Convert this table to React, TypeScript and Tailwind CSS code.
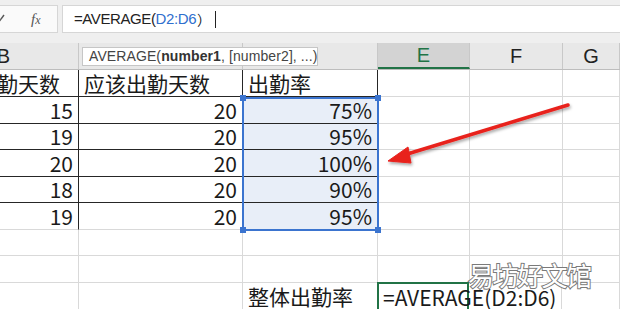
import React from 'react';

const font = "font-['Noto_Sans_CJK_SC',sans-serif]";

// column widths: B (clipped on the left), C, D, E, F, G
const colW = [
  'w-[150px] -ml-[71px] shrink-0',
  'w-[164px] shrink-0',
  'w-[135px] shrink-0',
  'w-[92px] shrink-0',
  'w-[93px] shrink-0',
  'flex-1',
];

const rowH = ['h-[27px]', 'h-[27px]', 'h-[26px]', 'h-[27px]', 'h-[26px]', 'h-[27px]', 'h-[26px]', 'h-[27px]', 'h-[30px]'];

type Cell = { text?: string; align?: 'l' | 'r'; dark?: boolean; sel?: boolean; active?: boolean };

const rows: Cell[][] = [
  [
    { text: '实际出勤天数', dark: true },
    { text: '应该出勤天数', dark: true },
    { text: '出勤率', dark: true },
  ],
  ...[
    ['15', '75%'],
    ['19', '95%'],
    ['20', '100%'],
    ['18', '90%'],
    ['19', '95%'],
  ].map(([b, d]) => [
    { text: b, align: 'r' as const, dark: true },
    { text: '20', align: 'r' as const, dark: true },
    { text: d, align: 'r' as const, dark: true, sel: true },
  ]),
  [],
  [],
  [{}, {}, { text: '整体出勤率' }, { text: '=AVERAGE(D2:D6)', active: true }],
];

const headers = ['B', 'C', 'D', 'E', 'F', 'G'];

const FormulaBar: React.FC = () => (
  <div className="h-[43px] bg-[#efefef] flex items-start pt-[5px] gap-[4px]">
    <div className="w-[58px] h-[28px] bg-[#fafafa] border border-l-0 border-[#d6d6d6] flex items-center shrink-0">
      <svg width="8" height="10" viewBox="0 0 8 10" className="-ml-[2px]">
        <path d="M0 9 L6 1" stroke="#555" strokeWidth="1.4" fill="none" />
      </svg>
      <span className="ml-[25px] text-[15px] italic text-[#555] font-['Liberation_Serif',serif]">
        f<span className="text-[12px]">x</span>
      </span>
    </div>
    <div className="flex-1 h-[28px] bg-white border border-r-0 border-[#d6d6d6] flex items-center pl-[11px] text-[15px] text-[#222] font-['Liberation_Sans',sans-serif] tracking-[-0.4px]">
      <span>=AVERAGE(</span>
      <span className="text-[#2f6fce]">D2:D6</span>
      <span className={`${font} text-[14px] ml-[1px]`}>）</span>
      <span className="ml-[4px] w-[1px] h-[17px] bg-[#222]" />
    </div>
  </div>
);

const HeaderRow: React.FC = () => (
  <div className="h-[27px] flex bg-[#e8e8e8] border-b border-[#bdbdbd] text-[20px] text-[#222] font-['Liberation_Sans',sans-serif]">
    {headers.map((h, i) => (
      <div
        key={h}
        className={`${colW[i]} flex items-center justify-center border-r border-[#c8c8c8] ${
          h === 'E' ? 'bg-[#d3d3d3] border-b-2 border-b-[#217346] text-[#217346]' : ''
        }`}
      >
        {h}
      </div>
    ))}
  </div>
);

export default function App() {
  return (
    <div className={`relative w-[620px] h-[309px] overflow-hidden bg-white ${font}`}>
      <FormulaBar />
      <HeaderRow />

      {rows.map((cells, r) => (
        <div key={r} className={`${rowH[r]} flex`}>
          {colW.map((w, c) => {
            const cell: Cell = cells[c] || {};
            const right = cell.dark ? 'border-r-[#262626]' : 'border-r-[#d9d9d9]';
            const bottom = cell.dark && r < 5 ? 'border-b-[#262626]' : 'border-b-[#d9d9d9]';
            const edge = cell.active
              ? 'relative z-10 border-2 border-[#217346] -ml-[1px] pl-[4px] -mt-[1px]'
              : `border-r border-b ${right} ${bottom} px-[5px]`;
            return (
              <div
                key={c}
                className={`${w} ${edge} ${cell.sel ? 'bg-[#e8eef8]' : ''} flex ${
                  r === 8 ? 'items-start pt-[1px]' : 'items-end pb-[1px]'
                } text-[21px] leading-[24px] text-[#1a1a1a] whitespace-nowrap overflow-visible ${
                  cell.align === 'r' ? 'justify-end' : 'justify-start'
                }`}
              >
                {cell.text}
              </div>
            );
          })}
        </div>
      ))}

      {/* argument tooltip */}
      <div className="absolute left-[82px] top-[47px] w-[236px] h-[19px] bg-white border border-[#c6c6c6] pl-[6px] text-[14px] leading-[17px] text-[#444] whitespace-nowrap font-['Liberation_Sans',sans-serif] tracking-[0.1px]">
        AVERAGE(<b className="font-bold text-[#333]">number1</b>, [number2], ...)
      </div>

      {/* selected range D2:D6 */}
      <div className="absolute left-[242px] top-[97px] w-[137px] h-[134px] border-2 border-[#3b74cf] pointer-events-none">
        <span className="absolute -left-[4px] -top-[4px] w-[6px] h-[6px] bg-[#3b74cf]" />
        <span className="absolute -right-[4px] -top-[4px] w-[6px] h-[6px] bg-[#3b74cf]" />
        <span className="absolute -left-[4px] -bottom-[4px] w-[6px] h-[6px] bg-[#3b74cf]" />
        <span className="absolute -right-[4px] -bottom-[4px] w-[6px] h-[6px] bg-[#3b74cf]" />
      </div>

      {/* red arrow */}
      <svg className="absolute left-0 top-0 z-20" width="620" height="309" viewBox="0 0 620 309">
        <defs>
          <filter id="sh" x="-10%" y="-10%" width="120%" height="130%">
            <feDropShadow dx="1" dy="2" stdDeviation="1.5" floodColor="#000" floodOpacity="0.35" />
          </filter>
        </defs>
        <g filter="url(#sh)" fill="#e8211c" stroke="#e8211c">
          <line x1="568" y1="105" x2="404" y2="155" strokeWidth="3.5" strokeLinecap="round" />
          <polygon points="388,161 408,147 411,163" strokeWidth="1" strokeLinejoin="round" />
        </g>
      </svg>

      {/* watermark */}
      <div className="absolute z-20 left-[468px] top-[260px] text-[26px] leading-[30px] text-white tracking-[-1.5px] [-webkit-text-stroke:2px_#7a7a7a] [paint-order:stroke_fill]">
        易坊好文馆
      </div>
    </div>
  );
}
